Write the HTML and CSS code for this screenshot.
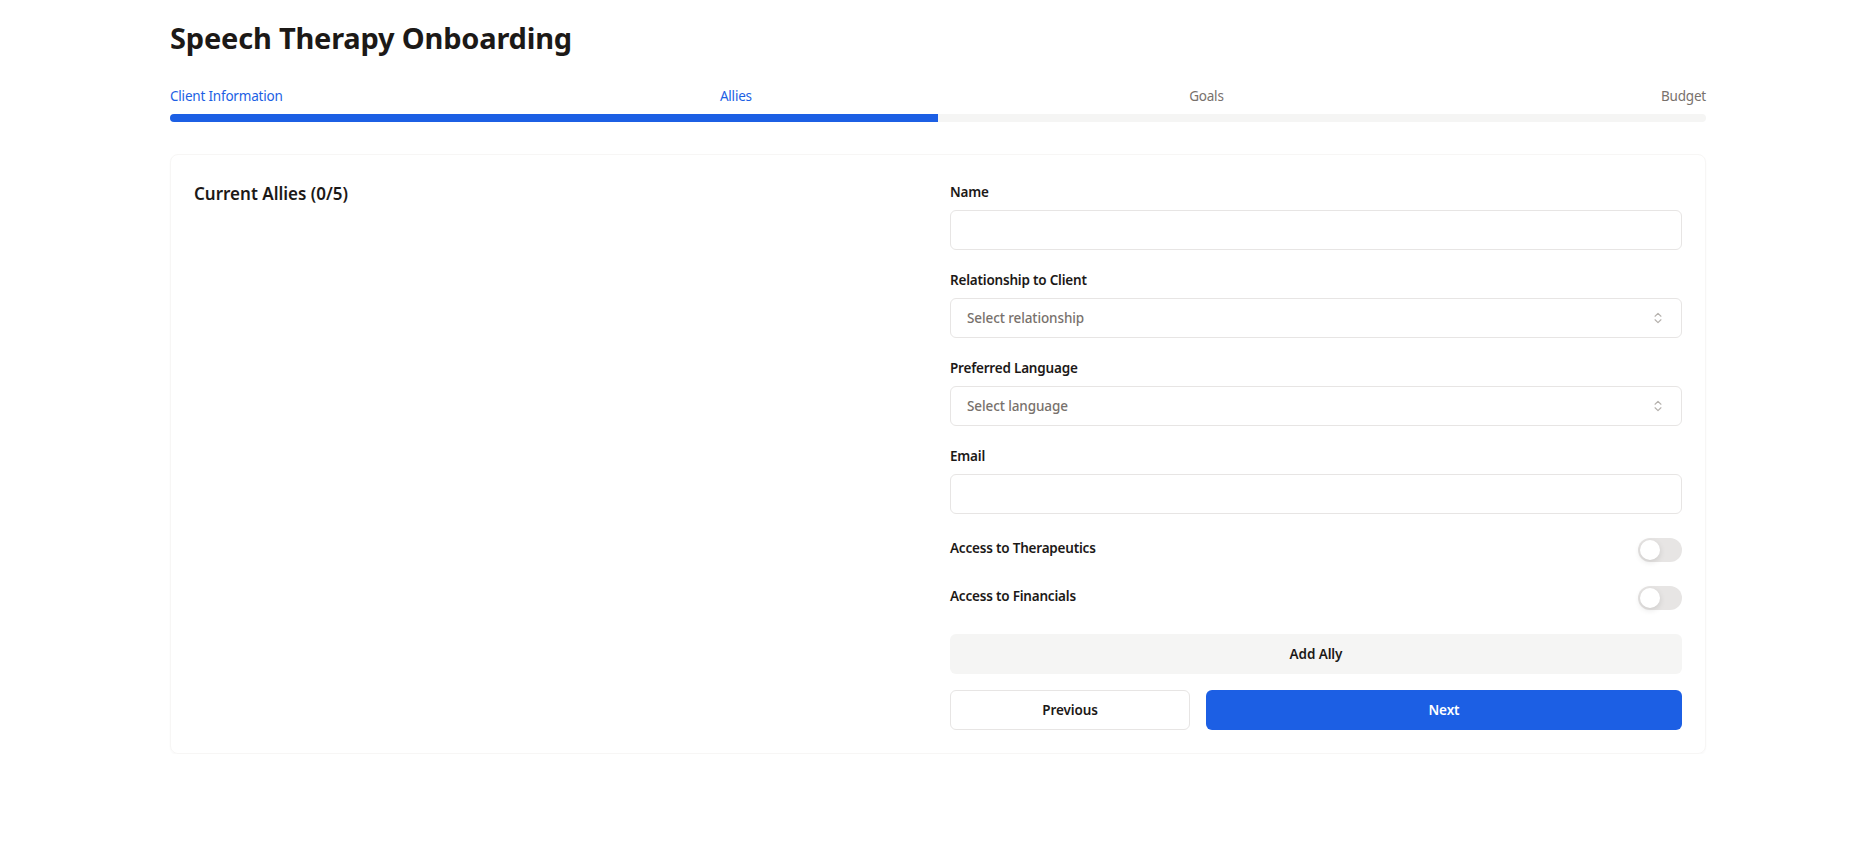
FILE: index.html
```html
<!DOCTYPE html>
<html lang="en">
<head>
<meta charset="utf-8">
<title>Speech Therapy Onboarding</title>
<link rel="stylesheet" href="styles.css">
</head>
<body>
<div class="page">
  <h1 class="title">Speech Therapy Onboarding</h1>
  <div class="steps">
    <span class="step active">Client Information</span>
    <span class="step active">Allies</span>
    <span class="step">Goals</span>
    <span class="step">Budget</span>
  </div>
  <div class="progress"><div class="progress-fill" style="width:50%"></div></div>

  <div class="card">
    <div class="col-left">
      <h2 class="section-title">Current Allies (0/5)</h2>
    </div>
    <form class="col-right">
      <div class="field">
        <label class="label">Name</label>
        <div class="input"></div>
      </div>
      <div class="field">
        <label class="label">Relationship to Client</label>
        <div class="input select">
          <span class="placeholder">Select relationship</span>
          <svg class="chev" viewBox="0 0 24 24" width="14" height="14" fill="none" stroke="currentColor" stroke-width="2" stroke-linecap="round" stroke-linejoin="round"><path d="m7 15 5 5 5-5"/><path d="m7 9 5-5 5 5"/></svg>
        </div>
      </div>
      <div class="field">
        <label class="label">Preferred Language</label>
        <div class="input select">
          <span class="placeholder">Select language</span>
          <svg class="chev" viewBox="0 0 24 24" width="14" height="14" fill="none" stroke="currentColor" stroke-width="2" stroke-linecap="round" stroke-linejoin="round"><path d="m7 15 5 5 5-5"/><path d="m7 9 5-5 5 5"/></svg>
        </div>
      </div>
      <div class="field">
        <label class="label">Email</label>
        <div class="input"></div>
      </div>
      <div class="toggle-row first">
        <span class="label">Access to Therapeutics</span>
        <span class="switch"><span class="thumb"></span></span>
      </div>
      <div class="toggle-row">
        <span class="label">Access to Financials</span>
        <span class="switch"><span class="thumb"></span></span>
      </div>
      <div class="btn btn-secondary add">Add Ally</div>
      <div class="nav">
        <div class="btn btn-outline prev">Previous</div>
        <div class="btn btn-primary next">Next</div>
      </div>
    </form>
  </div>
</div>
</body>
</html>
```
FILE: styles.css
```css
* { box-sizing: border-box; }
html, body { margin: 0; padding: 0; background: #ffffff; }
body {
  font-family: "Noto Sans", "Open Sans", sans-serif;
  color: #1c1917;
}
.page {
  width: 1536px;
  margin-left: 170px;
  padding-top: 20px;
}
.title {
  margin: 0;
  font-size: 29px;
  line-height: 36px;
  font-weight: 700;
  color: #1c1917;
  letter-spacing: -0.2px;
}
.steps {
  display: flex;
  justify-content: space-between;
  margin-top: 30px;
  font-size: 13.5px;
  letter-spacing: -0.2px;
  line-height: 20px;
}
.step { color: #78716c; }
.step.active { color: #1c5fe4; }
.progress {
  margin-top: 8px;
  height: 8px;
  border-radius: 999px;
  background: #f5f5f4;
  overflow: hidden;
}
.progress-fill { height: 100%; background: #1c5fe4; }

.card {
  margin-top: 32px;
  display: grid;
  grid-template-columns: 1fr 1fr;
  gap: 24px;
  padding: 23px;
  border: 1px solid #f7f6f5;
  border-radius: 8px;
  box-shadow: 0 1px 2px rgba(0,0,0,0.03);
}
.section-title {
  margin: 0;
  padding-top: 2px;
  font-size: 17px;
  line-height: 28px;
  font-weight: 600;
}
.col-right {
  display: flex;
  flex-direction: column;
  padding-top: 4px;
  margin: 0;
}
.field { display: flex; flex-direction: column; margin-bottom: 20px; }
.field:nth-child(4) { margin-bottom: 24px; }
.label {
  font-size: 13.5px;
  letter-spacing: -0.2px;
  line-height: 20px;
  font-weight: 600;
  color: #1c1917;
}
.field .label { margin-bottom: 8px; }
.input {
  height: 40px;
  border: 1px solid #e7e5e4;
  border-radius: 6px;
  background: #fff;
}
.select {
  display: flex;
  align-items: center;
  justify-content: space-between;
  padding: 0 16px;
}
.placeholder { font-size: 13.5px; letter-spacing: -0.1px; font-weight: 500; color: #78716c; }
.chev { color: #b5b1ad; }

.toggle-row {
  display: flex;
  justify-content: space-between;
  align-items: flex-start;
  height: 24px;
  margin-bottom: 24px;
}
.switch {
  position: relative;
  width: 44px;
  height: 24px;
  border-radius: 12px;
  background: #e7e5e4;
}
.thumb {
  position: absolute;
  left: 2px;
  top: 2px;
  width: 20px;
  height: 20px;
  border-radius: 50%;
  background: #fff;
  box-shadow: 0 2px 6px rgba(0,0,0,0.12);
}
.btn {
  height: 40px;
  display: flex;
  align-items: center;
  justify-content: center;
  font-size: 13.5px;
  letter-spacing: -0.1px;
  font-weight: 600;
  border-radius: 6px;
}
.btn-secondary { background: #f5f5f4; color: #1c1917; }
.nav { display: flex; gap: 16px; margin-top: 16px; }
.btn-outline { flex: 1; border: 1px solid #e7e5e4; background: #fff; color: #1c1917; }
.btn-primary { flex: 2; background: #1c5fe4; color: #fff; }
```
